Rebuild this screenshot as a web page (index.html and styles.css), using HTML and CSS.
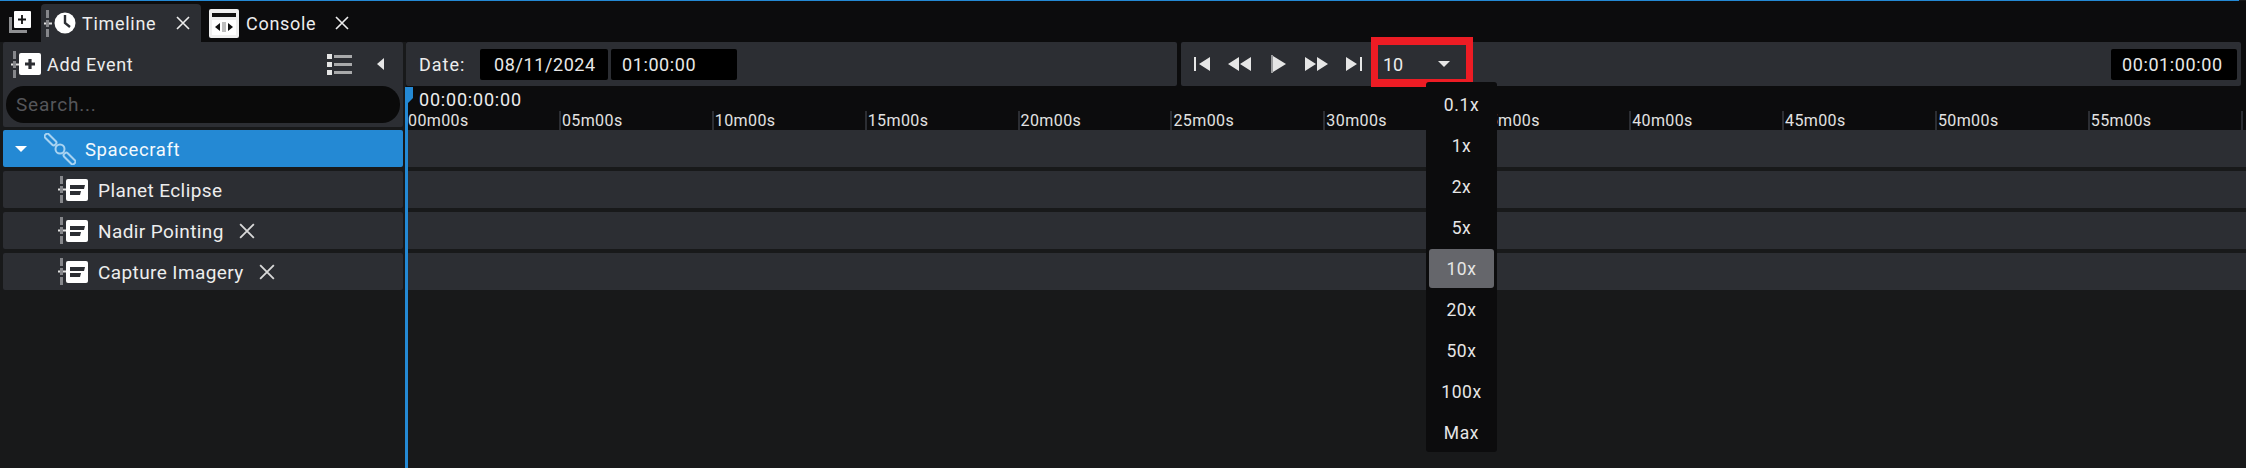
FILE: index.html
```html
<!DOCTYPE html>
<html lang="en">
<head>
<meta charset="utf-8">
<title>Timeline</title>
<link rel="stylesheet" href="styles.css">
</head>
<body>
<svg class="defs" width="0" height="0" aria-hidden="true">
  <symbol id="x" viewBox="0 0 14 14"><path d="M1 1 13 13M13 1 1 13" fill="none" stroke="currentColor" stroke-width="1.6"/></symbol>
  <symbol id="grip" viewBox="0 0 8 27"><path d="M2 0h3v8H2zM2 10h3v7H2zM2 19h3v8H2z" fill="#85868a"/><path d="M0 12.5h2v2H0zM5 12.5h3v2H5z" fill="#e0e0e0"/></symbol>
  <symbol id="evt" viewBox="0 0 22 22"><rect width="22" height="22" rx="2" fill="#fff"/><path d="M4 6h15l-1 4H4zM4 12h11l-1 4H4z" fill="#2c2e33"/></symbol>
</svg>
<div class="app">
  <div class="topline"></div>
  <nav class="tabbar">
    <svg class="add-tab" width="24" height="24" viewBox="0 0 24 24"><path d="M1 7v16h18v-3H4V7z" fill="#8f9092"/><rect x="6" y="1" width="17" height="17" rx="1" fill="#fff"/><path d="M14 5v9M10 9.500h8" stroke="#111" stroke-width="1.800"/></svg>
    <div class="tab active">
      <svg class="grip" width="8" height="27"><use href="#grip"/></svg>
      <svg class="clock" width="22" height="22" viewBox="0 0 22 22"><circle cx="11" cy="11" r="10.500" fill="#fff"/><path d="M11 3v8l5 4" fill="none" stroke="#2c2e33" stroke-width="2.400"/></svg>
      <span class="tab-label">Timeline</span>
      <svg class="close" width="14" height="14"><use href="#x"/></svg>
    </div>
    <div class="tab console">
      <svg width="30" height="29" viewBox="0 0 30 29"><rect width="30" height="29" rx="2" fill="#efefef"/><path d="M3 4h24v4H3z" fill="#111"/><path d="M3 11h24v15H3z" fill="#fff"/><path d="M11 14 6 18l5 4zM19 14l5 4-5 4z" fill="#111"/><path d="M13 13h4v10h-4z" fill="#bdbdbd"/></svg>
      <span class="tab-label">Console</span>
      <svg class="close" width="14" height="14"><use href="#x"/></svg>
    </div>
  </nav>
  <main class="body">
    <section class="left">
      <div class="left-head">
        <div class="head-row">
          <svg class="grip" width="8" height="27"><use href="#grip"/></svg>
          <svg width="22" height="22" viewBox="0 0 22 22"><rect width="22" height="22" rx="2" fill="#fff"/><path d="M11 6v10M6 11h10" stroke="#2c2e33" stroke-width="3.200"/></svg>
          <span class="head-label">Add Event</span>
          <svg class="list-ic" width="25" height="21" viewBox="0 0 25 21"><path d="M0 0h5v5H0zM0 8h5v5H0zM0 16h5v5H0z" fill="#e6e6e6"/><path d="M7 1h18v3H7zM7 9h18v3H7zM7 17h18v3H7z" fill="#a9aaab"/></svg>
          <svg class="collapse" width="7" height="12" viewBox="0 0 7 12"><path d="M7 0v12L0 6z" fill="#e6e6e6"/></svg>
        </div>
        <div class="search">Search...</div>
      </div>
      <div class="row selected">
        <svg class="caret" width="12" height="6" viewBox="0 0 12 6"><path d="M0 0h12L6 6z" fill="#fff"/></svg>
        <svg class="sat" width="32" height="32" viewBox="0 0 32 32"><g fill="none" stroke="#a9d3f1" stroke-width="2"><circle cx="16" cy="16" r="4.500"/><rect x="-7" y="-2.500" width="14" height="5" rx="2" transform="translate(6.500 6.500) rotate(45)"/><rect x="-7" y="-2.500" width="14" height="5" rx="2" transform="translate(25.500 25.500) rotate(45)"/></g></svg>
        <span class="sat-label">Spacecraft</span>
      </div>
      <div class="row child">
        <svg class="grip" width="8" height="27"><use href="#grip"/></svg>
        <svg width="22" height="22"><use href="#evt"/></svg>
        <span class="child-label">Planet Eclipse</span>
      </div>
      <div class="row child">
        <svg class="grip" width="8" height="27"><use href="#grip"/></svg>
        <svg width="22" height="22"><use href="#evt"/></svg>
        <span class="child-label">Nadir Pointing</span>
        <svg class="row-x" width="16" height="16"><use href="#x"/></svg>
      </div>
      <div class="row child">
        <svg class="grip" width="8" height="27"><use href="#grip"/></svg>
        <svg width="22" height="22"><use href="#evt"/></svg>
        <span class="child-label">Capture Imagery</span>
        <svg class="row-x" width="16" height="16"><use href="#x"/></svg>
      </div>
    </section>
    <section class="right">
      <div class="toolbar">
        <div class="panel date-panel">
          <span class="date-label">Date:</span>
          <span class="field date-field">08/11/2024</span>
          <span class="field time-field">01:00:00</span>
        </div>
        <div class="panel transport">
          <svg width="16" height="14" viewBox="0 0 16 14"><path d="M0 0h2v14H0zM16 0v14L5 7z" fill="#e6e6e6"/></svg>
          <svg width="23" height="14" viewBox="0 0 23 14"><path d="M11 0v14L0 7zM23 0v14L12 7z" fill="#e6e6e6"/></svg>
          <svg class="play" width="15" height="18" viewBox="0 0 15 18"><path d="M0 0h2v18H0z" fill="#9a9b9d"/><path d="M2 1v16L15 9z" fill="#e6e6e6"/></svg>
          <svg width="23" height="14" viewBox="0 0 23 14"><path d="M0 0v14L11 7zM12 0v14L23 7z" fill="#e6e6e6"/></svg>
          <svg width="16" height="14" viewBox="0 0 16 14"><path d="M0 0v14L11 7zM14 0h2v14h-2z" fill="#e6e6e6"/></svg>
          <div class="speed"><span>10</span><svg width="12" height="6" viewBox="0 0 12 6"><path d="M0 0h12L6 6z" fill="#e6e6e6"/></svg></div>
          <span class="field total-field">00:01:00:00</span>
        </div>
      </div>
      <div class="ruler">
        <div class="timecode">00:00:00:00</div>
        <div class="ticks">
          <span>00m00s</span><span>05m00s</span><span>10m00s</span><span>15m00s</span><span>20m00s</span><span>25m00s</span><span>30m00s</span><span>35m00s</span><span>40m00s</span><span>45m00s</span><span>50m00s</span><span>55m00s</span>
        </div>
      </div>
      <div class="track"></div>
      <div class="track"></div>
      <div class="track"></div>
      <div class="track"></div>
    </section>
  </main>
  <svg class="playhead" width="9" height="381" viewBox="0 0 9 381"><path d="M0 0h8v11l-5 5v365H0z" fill="#2489d4"/></svg>
  <div class="highlight-box"></div>
  <ul class="menu">
    <li>0.1x</li><li>1x</li><li>2x</li><li>5x</li><li class="current">10x</li><li>20x</li><li>50x</li><li>100x</li><li>Max</li>
  </ul>
</div>
</body>
</html>
```
FILE: styles.css
```css
* { box-sizing: border-box; }
html, body { margin: 0; padding: 0; }
body {
  width: 2246px;
  height: 468px;
  overflow: hidden;
  background: #0c0c0d;
  font-family: Roboto, "Liberation Sans", sans-serif;
  font-size: 18px;
  color: #ededed;
}
svg { display: block; flex: none; }
.defs { position: absolute; }
.app { position: relative; width: 2246px; height: 468px; display: flex; flex-direction: column; background: #18191a; }
.topline { height: 1px; width: 2239px; background: #2489d4; flex: none; }

.tabbar { height: 41px; flex: none; display: flex; align-items: stretch; padding-top: 3px; background: #0c0c0d; }
.add-tab { margin: 6px 9px 0 8px; }
.tab { display: flex; align-items: center; height: 38px; }
.tab.active { width: 160px; background: #2c2e33; border-radius: 4px 4px 0 0; padding-left: 3px; margin-right: 8px; }
.clock { margin-left: 2px; }
.tab-label { letter-spacing: .7px; }
.tab.active .tab-label { margin-left: 6px; width: 94px; }
.console .tab-label { margin-left: 7px; width: 89px; }
.tab .close { color: #ededed; }

.body { flex: 1; display: flex; min-height: 0; }
.left { width: 405px; flex: none; padding-left: 3px; padding-right: 2px; display: flex; flex-direction: column; background: #18191a; }
.left-head { height: 85px; background: #2c2e33; border-radius: 2px; display: flex; flex-direction: column; padding: 0 3px; margin-bottom: 3px; }
.head-row { height: 44px; flex: none; display: flex; align-items: center; padding-left: 5px; }
.head-label { margin-left: 6px; letter-spacing: .65px; flex: 1; }
.list-ic { margin-right: 25px; margin-top: 1px; }
.collapse { margin-right: 16px; }
.search { height: 37px; flex: none; border-radius: 18px; background: #0a0a0a; color: #55565a; padding-left: 10px; line-height: 38px; font-size: 19px; letter-spacing: .8px; }

.row { height: 37px; flex: none; margin-bottom: 4px; border-radius: 2px; background: #2c2e33; display: flex; align-items: center; }
.row.selected { background: #2489d4; color: #f4f9fd; padding-left: 12px; }
.row.selected .sat { margin: 0 9px 0 17px; }
.sat-label { letter-spacing: .6px; font-size: 18.500px; margin-top: 2px; }
.row.child { padding-left: 55px; }
.child-label { margin-left: 10px; margin-top: 2px; font-size: 19px; letter-spacing: .4px; }
.row-x { color: #d9d9d9; margin-left: 15px; }

.right { flex: 1; min-width: 0; display: flex; flex-direction: column; margin-left: 1px; background: #18191a; }
.toolbar { height: 44px; flex: none; display: flex; gap: 4px; background: #0c0c0d; padding-right: 5px; }
.panel { background: #2c2e33; border-radius: 2px; display: flex; align-items: center; height: 44px; }
.date-panel { width: 771px; flex: none; padding-left: 13px; }
.date-label { width: 61px; letter-spacing: 1px; flex: none; }
.field { height: 31px; background: #000; border-radius: 2px; line-height: 31px; display: block; letter-spacing: .6px; color: #e8e8e8; }
.date-field { width: 128px; padding-left: 14px; margin-right: 3px; }
.time-field { width: 126px; padding-left: 11px; }
.transport { flex: 1; padding-left: 13px; gap: 18px; }
.transport .play { margin: 0 1px 0 2px; }
.speed { display: flex; align-items: center; width: 72px; margin-left: 3px; gap: 35px; }
.total-field { width: 126px; padding-left: 11px; margin-left: auto; margin-right: 4px; }

.ruler { height: 44px; flex: none; background: #0c0c0d; padding-left: 2px; display: flex; flex-direction: column; }
.timecode { height: 25px; flex: none; padding: 3px 0 0 11px; line-height: 22px; letter-spacing: .8px; }
.ticks { flex: 1; display: grid; grid-template-columns: repeat(12, 152.900px); }
.ticks span { font-size: 16px; line-height: 19px; letter-spacing: .4px; color: #e2e2e2; border-right: 2px solid #2c2e33; white-space: nowrap; }
.ticks span + span { padding-left: 1px; }

.track { height: 37px; flex: none; margin: 0 0 4px 2px; background: #2c2e33; }

.playhead { position: absolute; left: 405px; top: 87px; }
.highlight-box { position: absolute; left: 1371px; top: 37px; width: 102px; height: 50px; border: 8px solid #ed1c24; border-left-width: 7px; border-right-width: 7px; }
.menu { position: absolute; left: 1426px; top: 82px; width: 71px; height: 370px; margin: 0; padding: 2px 3px; list-style: none; background: #0c0c0d; border-radius: 3px; display: flex; flex-direction: column; }
.menu li { height: 41px; line-height: 43px; text-align: center; flex: none; color: #e6e6e6; font-size: 17.500px; letter-spacing: .6px; }
.menu li.current { background: #65666b; border-radius: 3px; height: 39px; line-height: 41px; margin: 1px 0; }
```
